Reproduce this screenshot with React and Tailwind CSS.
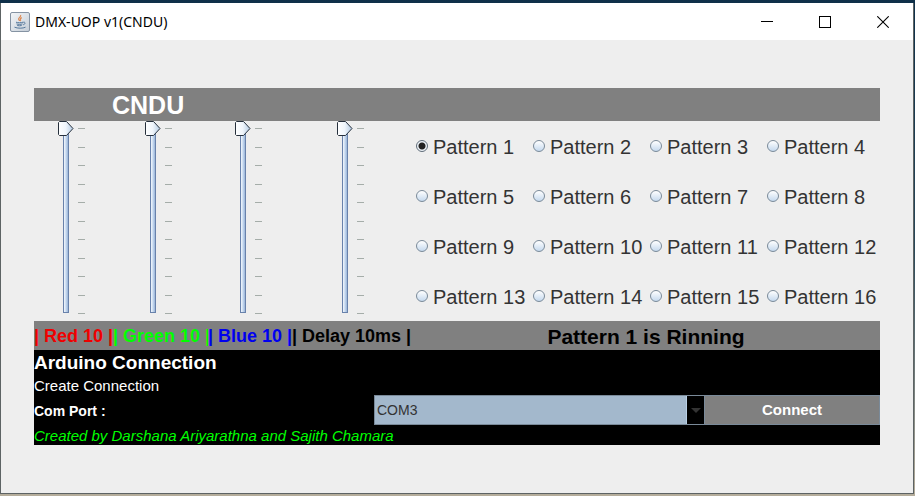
import { useState } from "react";

const PATTERNS = Array.from({ length: 16 }, (_, i) => i + 1);
const TICKS = Array.from({ length: 11 }, (_, i) => i);

const CHANNELS = [
  { name: "Red", text: "| Red 10 |", color: "text-[#f00000]" },
  { name: "Green", text: "| Green 10 |", color: "text-[#00ff00]" },
  { name: "Blue", text: "| Blue 10 |", color: "text-[#0000f0]" },
  { name: "Delay", text: "| Delay 10ms |", color: "text-black" },
];

function JavaIcon() {
  return (
    <svg width="20" height="20" viewBox="0 0 20 20" aria-hidden="true">
      <defs>
        <linearGradient id="tile" x1="0" y1="0" x2="1" y2="1">
          <stop offset="0" stopColor="#f4f6f8" />
          <stop offset="1" stopColor="#c3ccd6" />
        </linearGradient>
      </defs>
      <rect x="0.5" y="0.5" width="19" height="19" rx="1.5" fill="url(#tile)" stroke="#8593a3" />
      <path d="M10.600 3c1 2-3 2.700-1.900 4.600.3.6 1 .9 1 1.500M11.800 5.600c-1.300.7-2 1.300-1.300 2.100.4.500 0 1-.4 1.400" fill="none" stroke="#dc8a55" strokeWidth="1.2" />
      <path d="M6 10.200c2 .7 5 .7 7 0M6.500 11.900c1.800.6 4.200.6 6 0M7.200 13.500c1.500.4 3 .4 4.500 0" fill="none" stroke="#55789c" strokeWidth="1" />
      <path d="M4.500 15.200c3 1.300 8.500 1.300 11 0M13.200 10.200c2.600-.4 2.400 1.900 0 2.600" fill="none" stroke="#55789c" strokeWidth="1" />
    </svg>
  );
}

function Slider({ name }) {
  const [value, setValue] = useState(100);
  return (
    <div className="relative h-[200px] w-[31px]">
      <svg width="31" height="200" viewBox="0 0 31 200" aria-hidden="true">
        <defs>
          <linearGradient id={"track" + name}>
            <stop offset="0" stopColor="#ffffff" />
            <stop offset="0.4" stopColor="#d3e2f4" />
            <stop offset="1" stopColor="#8fadd4" />
          </linearGradient>
          <linearGradient id={"thumb" + name}>
            <stop offset="0" stopColor="#ffffff" />
            <stop offset="0.5" stopColor="#f0f6fc" />
            <stop offset="1" stopColor="#b4cbe4" />
          </linearGradient>
        </defs>
        <rect x="5.5" y="7.5" width="5" height="184" fill={"url(#track" + name + ")"} stroke="#6982ab" />
        {TICKS.map((t) => (
          <path key={t} d={"M20 " + (Math.floor(7.5 + t * 18.5) + 0.5) + "h7"} stroke="#a5ada9" />
        ))}
        <path
          transform={"translate(0 " + (100 - value) * 1.85 + ")"}
          d="M1.5 .5h7l6.5 7-6.500 7h-7l-1-1v-12z"
          fill={"url(#thumb" + name + ")"}
          stroke="#26303c"
        />
      </svg>
      <input
        type="range"
        aria-label={name}
        value={value}
        onChange={(e) => setValue(Number(e.target.value))}
        className="absolute inset-0 h-full w-full cursor-default opacity-0 [direction:rtl] [writing-mode:vertical-lr]"
      />
    </div>
  );
}

function TitleBar() {
  const button = "flex h-full w-[58px] items-center justify-center";
  return (
    <header className="flex h-[37px] items-center bg-white pr-px pl-[9px]">
      <JavaIcon />
      <h1 className="ml-[5px] flex-1 font-['Noto_Sans',sans-serif] text-[14px] text-black">DMX-UOP v1(CNDU)</h1>
      <button type="button" aria-label="Minimize" className={button}>
        <svg width="12" height="12" aria-hidden="true"><path d="M0 5.500h12" stroke="#000" /></svg>
      </button>
      <button type="button" aria-label="Maximize" className={button}>
        <svg width="12" height="12" aria-hidden="true"><rect x=".5" y=".5" width="11" height="11" fill="none" stroke="#000" /></svg>
      </button>
      <button type="button" aria-label="Close" className={button}>
        <svg width="12" height="12" aria-hidden="true"><path d="M.3.3l11.400 11.400M11.700.3L.3 11.700" stroke="#000" strokeWidth="1.1" /></svg>
      </button>
    </header>
  );
}

export default function App() {
  const [pattern, setPattern] = useState(1);
  return (
    <div className="flex min-h-screen flex-col bg-[linear-gradient(#0f3049,#294858_50%,#b5ad9b)] pt-[3px] pr-px pb-[2px] font-['Liberation_Sans',Arial,sans-serif]">
      <div className="flex flex-1 flex-col border-r border-b border-l border-[#5d6364] bg-[#eeeeee]">
        <TitleBar />
        <main className="flex flex-col px-[33px] pt-12 pb-12">
          <h2 className="h-[33px] bg-[#808080] pl-[78px] text-[25px] leading-[34px] font-bold text-white">CNDU</h2>

          <div className="grid grid-cols-[79px_95px_84px_120px_1fr]">
            {CHANNELS.map((c) => (
              <div key={c.name} className="flex justify-center">
                <Slider name={c.name} />
              </div>
            ))}
            <fieldset aria-label="Patterns" className="grid grid-cols-4">
              {PATTERNS.map((n) => (
                <label key={n} className="flex h-[50px] items-center gap-[5px] pl-1 text-[20px] whitespace-nowrap text-[#333333]">
                  <input
                    type="radio"
                    name="pattern"
                    checked={pattern === n}
                    onChange={() => setPattern(n)}
                    className="h-3 w-3 shrink-0 appearance-none rounded-full border border-[#7a8a99] bg-[linear-gradient(#ffffff,#c5d9ee)] checked:border-[#5f6c78] checked:bg-[radial-gradient(circle,#222222_3px,#eef3f8_4px)]"
                  />
                  <span className="pt-0.5">Pattern {n}</span>
                </label>
              ))}
            </fieldset>

            {CHANNELS.map((c) => (
              <div key={c.name} className={"h-[29px] bg-[#808080] text-[18px] leading-[30px] font-bold whitespace-nowrap " + c.color}>
                {c.text}
              </div>
            ))}
            <div className="h-[29px] bg-[#808080] text-center text-[21px] leading-[31px] font-bold text-black">
              Pattern {pattern} is Rinning
            </div>
          </div>

          <section className="bg-black text-white">
            <h2 className="h-[26px] text-[19px] leading-[26px] font-bold">Arduino Connection</h2>
            <p className="h-[19px] text-[15px] leading-[20px]">Create Connection</p>
            <div className="grid grid-cols-[340fr_331fr_175fr] grid-rows-[30px]">
              <label htmlFor="port" className="text-[14px] leading-[32px] font-bold">Com Port :</label>
              <div className="relative">
                <select
                  id="port"
                  defaultValue="COM3"
                  className="h-full w-full appearance-none border border-[#7a8a99] bg-[linear-gradient(to_left,#000000_17px,#b8cfe5_17px,#b8cfe5_18px,#a3b8cc_18px)] pl-[2px] text-[14px] text-[#333333]"
                >
                  <option>COM3</option>
                </select>
                <svg className="pointer-events-none absolute top-[13px] right-1" width="10" height="5" aria-hidden="true">
                  <path d="M0 0h10L5 5z" fill="#333333" />
                </svg>
              </div>
              <button type="button" className="border-y border-r border-[#7a8a99] bg-[#808080] pt-px text-[15px] font-bold text-white">
                Connect
              </button>
            </div>
            <p className="h-[20px] text-[15px] leading-[22px] text-[#00ff00] italic">
              Created by Darshana Ariyarathna and Sajith Chamara
            </p>
          </section>
        </main>
      </div>
    </div>
  );
}
